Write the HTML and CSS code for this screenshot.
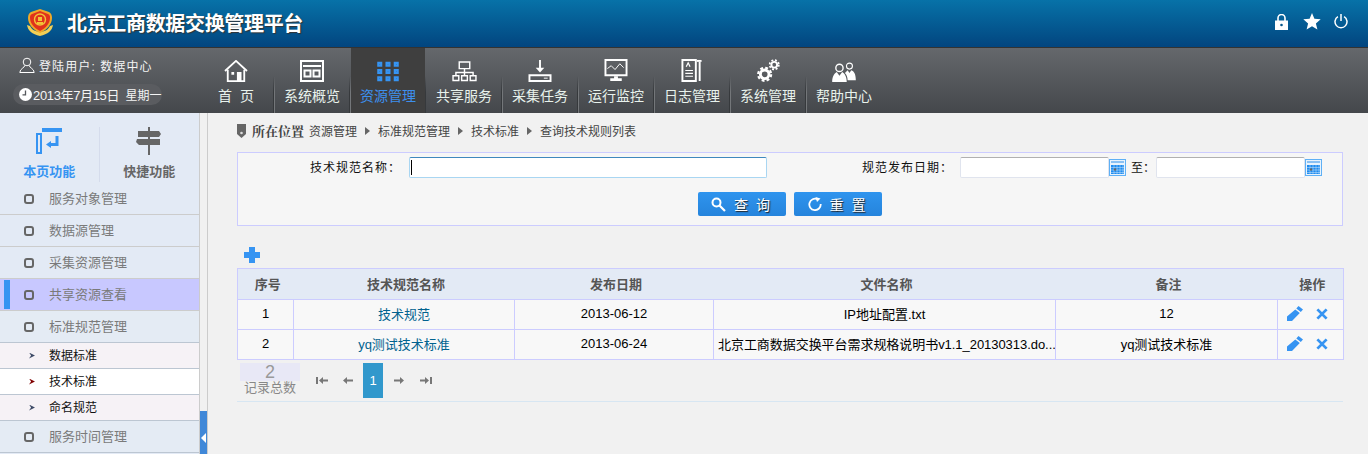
FILE: index.html
```html
<!DOCTYPE html>
<html lang="zh-CN">
<head>
<meta charset="utf-8">
<title>北京工商数据交换管理平台</title>
<link rel="stylesheet" href="styles.css">
</head>
<body>
<header class="topbar">
  <div class="brand">
    <svg class="emblem" width="26" height="27" viewBox="0 0 26 27">
      <path d="M0 16c1 6 5 9 13 11 8-2 12-5 13-11l-3 1c-2 4-5 5-10 6-5-1-8-2-10-6z" fill="#f3cf55"/>
      <path d="M13 0l9 3c2 1 3 3 3 6 0 6-5 12-12 15C6 21 1 15 1 9c0-3 1-5 3-6z" fill="#f0a828"/>
      <path d="M13 2l8 3c2 1 2 2 2 4 0 5-4 10-10 13C7 19 3 14 3 9c0-2 0-3 2-4z" fill="#e0321c"/>
      <circle cx="13" cy="10.500" r="5.500" fill="none" stroke="#f2c438" stroke-width="1.400"/>
      <path d="M10 13h6v2h-6zM11 8h4v4h-4z" fill="#f2c438"/>
    </svg>
    <h1 class="title">北京工商数据交换管理平台</h1>
  </div>
  <div class="top-actions">
    <svg class="lock" width="13" height="16" viewBox="0 0 13 16"><path d="M3 7V4a3.500 3.500 0 0 1 7 0v3" fill="none" stroke="#fff" stroke-width="1.600"/><path d="M0 6.500h13V16H0z" fill="#fff"/><circle cx="6.500" cy="11" r="1.300" fill="#06568c"/></svg>
    <svg width="18" height="17" viewBox="0 0 18 17"><path d="M9 0l2.400 5.800 6.300.5-4.800 4.100 1.500 6.100L9 13.200l-5.400 3.300 1.500-6.100L.3 6.300l6.300-.5z" fill="#fff"/></svg>
    <svg width="14" height="17" viewBox="0 0 14 17"><path d="M3.900 3.600a6 6 0 1 0 6.200 0" fill="none" stroke="#fff" stroke-width="1.500"/><path d="M7 1v7" stroke="#fff" stroke-width="1.500"/></svg>
  </div>
</header>

<nav class="navbar">
  <div class="userbox">
    <div class="user-line">
      <svg width="16" height="16" viewBox="0 0 16 16"><circle cx="8" cy="5" r="3.800" fill="none" stroke="#fff"/><path d="M5.800 8.500C5.500 11 1 11.500.8 15.500h14.400C15 11.500 10.500 11 10.200 8.500" fill="none" stroke="#fff"/></svg>
      <span>登陆用户: 数据中心</span>
    </div>
    <div class="date-pill">
      <svg width="13" height="13" viewBox="0 0 13 13"><circle cx="6.500" cy="6.500" r="6.500" fill="#fff"/><path d="M6.500 2.500v4.300H3.500" fill="none" stroke="#55585c" stroke-width="1.300"/></svg>
      <span>2013年7月15日&nbsp;<small class="week">星期一</small></span>
    </div>
  </div>
  <ul class="menu">
    <li class="menu-item">
      <svg width="24" height="22" viewBox="0 0 26 24"><path d="M1 12L13 1l12 11" fill="none" stroke="#fff" stroke-width="2"/><path d="M4 10.500V23h18V10.500" fill="none" stroke="#fff" stroke-width="2"/><path d="M14 13h5v10h-5zM8 13h3v3H8z" fill="#fff"/></svg>
      <span>首&nbsp;&nbsp;页</span>
    </li>
    <li class="menu-item">
      <svg width="24" height="22" viewBox="0 0 24 22"><path d="M1 1h22v20H1z" fill="none" stroke="#fff" stroke-width="2"/><path d="M3 6h18" stroke="#fff" stroke-width="2"/><path d="M4.500 10.500h6v6h-6zM13.500 10.500h6v6h-6z" fill="none" stroke="#fff" stroke-width="2"/></svg>
      <span>系统概览</span>
    </li>
    <li class="menu-item active">
      <svg width="22" height="21" viewBox="0 0 24 22"><g fill="none" stroke="#3694f2" stroke-width="2.500"><path d="M1.500 1.500h3v3h-3zM10.500 1.500h3v3h-3zM19.500 1.500h3v3h-3zM1.500 9.500h3v3h-3zM10.500 9.500h3v3h-3zM19.500 9.500h3v3h-3zM1.500 17.500h3v3h-3zM10.500 17.500h3v3h-3zM19.500 17.500h3v3h-3z"/></g></svg>
      <span>资源管理</span>
    </li>
    <li class="menu-item">
      <svg width="25" height="21" viewBox="0 0 26 22"><g fill="none" stroke="#fff" stroke-width="1.500"><path d="M7.500 1h11v7h-11zM13 8v4M4 15v-3h18v3M13 12v3M1 15.500h6v5H1zM10 15.500h6v5h-6zM19 15.500h6v5h-6z"/></g></svg>
      <span>共享服务</span>
    </li>
    <li class="menu-item">
      <svg width="24" height="23" viewBox="0 0 24 24"><path d="M12 1v10" stroke="#fff" stroke-width="2"/><path d="M7.500 9h9L12 14z" fill="#fff"/><path d="M1 17h22v6H1z" fill="none" stroke="#fff" stroke-width="2"/><path d="M16 20h4" stroke="#fff"/></svg>
      <span>采集任务</span>
    </li>
    <li class="menu-item">
      <svg width="24" height="23" viewBox="0 0 24 24"><path d="M1 1h22v16H1z" fill="none" stroke="#fff" stroke-width="2"/><path d="M3 10l4-3 4 4 5-6 4 4" fill="none" stroke="#fff"/><path d="M10 18h4v2h4v3H6v-3h4z" fill="#fff"/></svg>
      <span>运行监控</span>
    </li>
    <li class="menu-item">
      <svg width="22" height="23" viewBox="0 0 22 24"><path d="M15 1H1v22h14zM19 3v20" fill="none" stroke="#fff" stroke-width="2"/><path d="M16 1h5v2h-5z" fill="#fff"/><path d="M5 8l2-4 2 4M4 12h8M4 15h8M4 18h8" fill="none" stroke="#fff" stroke-width="1.300"/></svg>
      <span>日志管理</span>
    </li>
    <li class="menu-item">
      <svg width="23" height="23" viewBox="0 0 24 24"><circle cx="8" cy="16" r="4.500" fill="none" stroke="#fff" stroke-width="3"/><circle cx="8" cy="16" r="6.800" fill="none" stroke="#fff" stroke-width="2.200" stroke-dasharray="3 2.300"/><circle cx="18" cy="6" r="3" fill="none" stroke="#fff" stroke-width="2"/><circle cx="18" cy="6" r="4.800" fill="none" stroke="#fff" stroke-width="1.800" stroke-dasharray="2 1.800"/></svg>
      <span>系统管理</span>
    </li>
    <li class="menu-item">
      <svg width="26" height="20" viewBox="0 0 28 22"><circle cx="9" cy="6.500" r="4" fill="none" stroke="#fff" stroke-width="1.500"/><circle cx="20" cy="4.500" r="3.300" fill="none" stroke="#fff" stroke-width="1.200"/><path d="M1 22c0-6 2-9 5-11l3 4 3-4c3 2 5 5 5 11z" fill="#fff"/><path d="M18 20c0-3-1-6-3-8l3-3 2 3 2-3c3 1 5 4 5 11h-9z" fill="#fff"/></svg>
      <span>帮助中心</span>
    </li>
  </ul>
</nav>

<div class="workspace">
  <aside class="sidebar">
    <div class="tabs">
      <div class="tab current">
        <svg class="tab-icon" width="26" height="26" viewBox="0 0 26 26"><path d="M6 0h20v4H6z" fill="#3694f2"/><path d="M0 5h6v21H0z" fill="#3694f2"/><path d="M2 7h2v17H2z" fill="#e3eaf5"/><path d="M21 8v8.500H12" fill="none" stroke="#3694f2" stroke-width="3"/><path d="M10 16.500l5-3.500v7z" fill="#3694f2"/></svg>
        <span>本页功能</span>
      </div>
      <div class="tab">
        <svg class="tab-icon" width="26" height="28" viewBox="0 0 26 28"><path d="M12 0h2v28h-2z" fill="#666"/><path d="M2 4h21l2 3-2 3H2zM1 12h23v6H3l-3-3z" fill="#666"/></svg>
        <span>快捷功能</span>
      </div>
    </div>
    <ul class="side-list">
      <li class="side-item"><i class="bullet"></i>服务对象管理</li>
      <li class="side-item"><i class="bullet"></i>数据源管理</li>
      <li class="side-item"><i class="bullet"></i>采集资源管理</li>
      <li class="side-item selected"><i class="bullet"></i>共享资源查看</li>
      <li class="side-item open"><i class="bullet"></i>标准规范管理</li>
      <li class="side-sub"><i class="chev"></i>数据标准</li>
      <li class="side-sub on"><i class="chev"></i>技术标准</li>
      <li class="side-sub"><i class="chev"></i>命名规范</li>
      <li class="side-item open"><i class="bullet"></i>服务时间管理</li>
    </ul>
  </aside>
  <div class="splitter"><span class="handle"></span></div>

  <main class="content">
    <div class="crumbs">
      <svg width="9" height="14" viewBox="0 0 9 14"><path d="M0 0h9v10l-4.500 4L0 10z" fill="#666"/><circle cx="4.500" cy="9" r="1.300" fill="#ddd"/></svg>
      <b>所在位置</b>
      <span>资源管理</span><i class="arrow"></i>
      <span>标准规范管理</span><i class="arrow"></i>
      <span>技术标准</span><i class="arrow"></i>
      <span>查询技术规则列表</span>
    </div>

    <form class="search">
      <div class="search-row">
        <label class="lab lab-name">技术规范名称：</label>
        <div class="name-input"><span class="caret"></span></div>
        <label class="lab lab-date">规范发布日期：</label>
        <div class="date-input"></div>
        <svg class="cal" width="17" height="17" viewBox="0 0 17 17"><path d="M0 0h17v17H0z" fill="#5fb0f5"/><path d="M1 1h15v15H1z" fill="#e8f3fd"/><path d="M2 3h13" stroke="#2f8fe8"/><path d="M2 6h13v9H2z" fill="#1f8cf0"/><path d="M2 8.500h13M2 11h13M2 13.500h13M5 6v9M8 6v9M11 6v9M14 6v9" stroke="#cfe6fb" stroke-width=".5"/><circle cx="6" cy="10.500" r="1.200" fill="#666"/></svg>
        <label class="lab lab-to">至：</label>
        <div class="date-input"></div>
        <svg class="cal" width="17" height="17" viewBox="0 0 17 17"><path d="M0 0h17v17H0z" fill="#5fb0f5"/><path d="M1 1h15v15H1z" fill="#e8f3fd"/><path d="M2 3h13" stroke="#2f8fe8"/><path d="M2 6h13v9H2z" fill="#1f8cf0"/><path d="M2 8.500h13M2 11h13M2 13.500h13M5 6v9M8 6v9M11 6v9M14 6v9" stroke="#cfe6fb" stroke-width=".5"/><circle cx="6" cy="10.500" r="1.200" fill="#666"/></svg>
      </div>
      <div class="btn-row">
        <button type="button" class="btn">
          <svg width="15" height="15" viewBox="0 0 15 15"><circle cx="5.500" cy="5.500" r="4" fill="none" stroke="#fff" stroke-width="2"/><path d="M8.500 8.500l5.500 5.500" stroke="#fff" stroke-width="2.200"/></svg>
          <span>查 询</span>
        </button>
        <button type="button" class="btn">
          <svg width="14" height="14" viewBox="0 0 14 14"><path d="M9.500 2.300A5.700 5.700 0 1 0 12.700 7" fill="none" stroke="#fff" stroke-width="1.800"/><path d="M7.500 0l5 1.500-3.500 3.500z" fill="#fff"/></svg>
          <span>重 置</span>
        </button>
      </div>
    </form>

    <svg class="add" width="16" height="16" viewBox="0 0 16 16"><path d="M5 0h6v5h5v6h-5v5H5v-5H0V5h5z" fill="#3694f2"/></svg>

    <table class="grid">
      <thead>
        <tr><th class="c1">序号</th><th class="c2">技术规范名称</th><th class="c3">发布日期</th><th class="c4">文件名称</th><th class="c5">备注</th><th class="c6">操作</th></tr>
      </thead>
      <tbody>
        <tr>
          <td>1</td><td><a class="link">技术规范</a></td><td>2013-06-12</td><td>IP地址配置.txt</td><td>12</td>
          <td>
            <div class="ops">
              <svg width="16" height="15" viewBox="0 0 16 15"><path d="M11.500 0L16 3.500 13.800 6l-4.500-3.500zM8.300 3.500l4.500 3.500L5 15H0v-4.500z" fill="#3694f2"/></svg>
              <svg width="12" height="12" viewBox="0 0 13 13"><path d="M1.500 1.500l10 10M11.500 1.500l-10 10" stroke="#3694f2" stroke-width="3"/></svg>
            </div>
          </td>
        </tr>
        <tr>
          <td>2</td><td><a class="link">yq测试技术标准</a></td><td>2013-06-24</td><td class="clip">北京工商数据交换平台需求规格说明书v1.1_20130313.do...</td><td>yq测试技术标准</td>
          <td>
            <div class="ops">
              <svg width="16" height="15" viewBox="0 0 16 15"><path d="M11.500 0L16 3.500 13.800 6l-4.500-3.500zM8.300 3.500l4.500 3.500L5 15H0v-4.500z" fill="#3694f2"/></svg>
              <svg width="12" height="12" viewBox="0 0 13 13"><path d="M1.500 1.500l10 10M11.500 1.500l-10 10" stroke="#3694f2" stroke-width="3"/></svg>
            </div>
          </td>
        </tr>
      </tbody>
    </table>

    <div class="pager">
      <div class="total"><strong>2</strong><span>记录总数</span></div>
      <div class="pages">
        <span class="pg"><svg width="12" height="7" viewBox="0 0 12 7"><path d="M0 0h2v7H0zM3 3.500L7 0v2.500h5v2H7V7z" fill="#777"/></svg></span>
        <span class="pg"><svg width="10" height="7" viewBox="0 0 10 7"><path d="M0 3.500L4 0v2.500h6v2H4V7z" fill="#777"/></svg></span>
        <span class="pg cur">1</span>
        <span class="pg"><svg width="10" height="7" viewBox="0 0 10 7"><path d="M10 3.500L6 0v2.500H0v2h6V7z" fill="#777"/></svg></span>
        <span class="pg last"><svg width="12" height="7" viewBox="0 0 12 7"><path d="M12 0h-2v7h2zM9 3.500L5 0v2.500H0v2h5V7z" fill="#777"/></svg></span>
      </div>
    </div>
  </main>
</div>
</body>
</html>
```
FILE: styles.css
```css
* { box-sizing: border-box; }
html, body { margin: 0; padding: 0; height: 454px; overflow: hidden; }
body { font-family: "Liberation Sans", "Noto Sans CJK SC", sans-serif; font-size: 12px; color: #000; background: #f1f1f1; }
ul { list-style: none; margin: 0; padding: 0; }

.topbar { height: 48px; display: flex; justify-content: space-between; align-items: center; background: linear-gradient(#0772a8, #02457f); border-bottom: 1px solid #333; }
.brand { display: flex; align-items: center; padding-left: 27px; }
.emblem { margin-right: 14px; margin-top: -2px; }
.title { margin: 0; font-size: 20px; font-weight: bold; line-height: 24px; color: #fff; text-shadow: 1px 1px 1px #333; letter-spacing: -.33px; }
.top-actions { display: flex; align-items: center; gap: 13px; padding-right: 20px; margin-top: -4px; }
.lock { margin-right: 2px; }

.navbar { height: 65px; display: flex; background: linear-gradient(#65686c, #44474b); color: #fff; }
.userbox { width: 199px; flex: none; padding: 8px 0 0 13px; }
.user-line { display: flex; align-items: center; gap: 4px; padding-left: 6px; height: 18px; color: #f4f4f4; letter-spacing: 1.100px; }
.date-pill { display: inline-flex; align-items: center; gap: 1px; width: 149px; height: 21px; margin-top: 10px; padding: 0 0 0 6px; border-radius: 11px; background: #5a5c60; color: #f4f4f4; white-space: nowrap; font-size: 13px; letter-spacing: -.35px; }
.week { font-size: 12px; letter-spacing: 0; margin-left: 3px; }
.menu { display: flex; }
.menu-item { width: 76px; height: 65px; display: flex; flex-direction: column; align-items: center; justify-content: flex-end; padding: 0 2px 9px 0; font-size: 14px; line-height: 16px; color: #e8f2ec; white-space: nowrap; background: linear-gradient(transparent 28px, #36393c 44px) calc(100% - 1px) 0 / 1px 100% no-repeat, linear-gradient(transparent 28px, #74777a 44px) 100% 0 / 1px 100% no-repeat; }
.menu-item svg { margin-bottom: 6px; }
.menu-item:last-child { background: none; }
.menu-item.active { background: linear-gradient(to right, #3f3f3f 74px, transparent 74px), linear-gradient(transparent 28px, #36393c 44px) calc(100% - 1px) 0 / 1px 100% no-repeat; color: #3d90ee; }

.workspace { display: flex; height: 341px; }
.sidebar { width: 200px; flex: none; background: #e3eaf5; border-right: 1px solid #ccc; overflow: hidden; }
.tabs { display: flex; height: 70px; padding-top: 14px; }
.tab { width: 100px; display: flex; flex-direction: column; align-items: center; font-weight: bold; font-size: 13px; color: #666; height: 55px; }
.tab.current { color: #3694f2; border-right: 1px solid #d5dcec; }
.tab-icon { height: 28px; margin-bottom: 6px; }
.side-item { position: relative; height: 32px; display: flex; align-items: center; padding: 0 0 2px 24px; border-bottom: 1px solid #ccc; font-size: 13px; color: #7a7a7a; }
.side-item.selected { background: #c8c8ff; }
.side-item.selected::before { content: ""; position: absolute; left: 4px; top: 1px; bottom: 1px; width: 6px; background: #3694f2; }
.side-item.open { background: #e4ebf4; border-bottom-color: #bcc6d2; }
.bullet { width: 10px; height: 10px; margin-right: 15px; margin-top: 2px; border: 2px solid #666; border-radius: 3px; }
.side-sub { height: 26px; display: flex; align-items: center; padding: 0 0 2px 29px; border-bottom: 1px solid #bcc6d2; background: #f6f2f6; color: #111; font-size: 12px; }
.side-sub.on { background: #fff; }
.chev { width: 6px; height: 6px; margin-right: 14px; margin-top: 2px; background: #3d4a66; clip-path: polygon(0 0, 100% 50%, 0 100%, 35% 50%); }
.side-sub.on .chev { background: #800000; }
.splitter { position: relative; width: 8px; flex: none; background: #f1f1f1; border-right: 1px solid #ccc; }
.handle { position: absolute; left: 0; right: 0; bottom: 0; height: 43px; background: #4088d8; }
.handle::after { content: ""; position: absolute; left: 1px; top: 22px; border-right: 5px solid #fff; border-top: 5px solid transparent; border-bottom: 5px solid transparent; }

.content { flex: 1; padding: 0 25px 0 29px; min-width: 0; }
.crumbs { height: 39px; display: flex; align-items: center; gap: 5px; padding-bottom: 4px; color: #444; }
.crumbs b { font-family: "Liberation Serif", "Noto Serif CJK SC", "Noto Sans CJK SC", serif; font-size: 13px; margin: 0 0 0 1px; color: #444; }
.arrow { width: 0; height: 0; margin: 0 3px; border-left: 5px solid #666; border-top: 4px solid transparent; border-bottom: 4px solid transparent; }
.search { height: 74px; background: #f6f6f6; border: 1px solid #ccccff; }
.search-row { display: flex; align-items: center; height: 29px; }
.lab { color: #111; letter-spacing: 1px; white-space: nowrap; padding-bottom: 2px; }
.lab-name { margin-left: 72px; width: 99px; }
.name-input { width: 358px; height: 21px; border: 1px solid #3f88bd; border-bottom-color: #a9d6f2; border-left-color: #a9d6f2; border-right-color: #a9d6f2; border-radius: 2px; background: #fff; padding: 2px 0 0 1px; }
.caret { display: block; width: 1px; height: 15px; background: #000; }
.lab-date { margin-left: 95px; width: 98px; }
.date-input { width: 149px; height: 21px; background: #fff; border: 1px solid #e0e4ee; border-top-color: #b0b0b0; border-radius: 2px; }
.cal { flex: none; }
.lab-to { margin: 0 2px 0 5px; width: 23px; letter-spacing: 0; }
.btn-row { display: flex; justify-content: center; gap: 8px; padding-top: 10px; padding-right: 1px; }
.btn { width: 88px; height: 24px; display: flex; align-items: center; justify-content: center; gap: 8px; padding: 0; border: 0; border-radius: 2px; background: linear-gradient(#2f94ee, #2584dc); color: #fff; font: 14px "Liberation Sans", "Noto Sans CJK SC", sans-serif; letter-spacing: 2px; text-shadow: 1px 1px 1px #222; }
.add { display: block; margin: 21px 0 5px 7px; }

.grid { width: 1106px; table-layout: fixed; border-collapse: collapse; background: #f8f8f8; font-size: 13px; }
.grid th, .grid td { border: 1px solid #ccccff; padding: 0 0 2px; text-align: center; white-space: nowrap; overflow: hidden; height: 30px; }
.grid th { height: 31px; padding-left: 4px; background: #e3eaf5; color: #555; font-size: 13px; font-weight: bold; border-left: 0; border-right: 0; }
.grid th:first-child { border-left: 1px solid #ccccff; }
.grid th:last-child { border-right: 1px solid #ccccff; }
.c1 { width: 56px; } .c2 { width: 221px; } .c3 { width: 199px; } .c4 { width: 342px; } .c5 { width: 222px; } .c6 { width: 66px; }
.link { color: #00628f; }
.grid td.clip { overflow: hidden; padding-left: 4px; letter-spacing: -.05px; }
.ops { display: flex; align-items: center; justify-content: center; gap: 13px; padding-right: 7px; }

.pager { display: flex; height: 42px; padding: 3px 0 0 3px; border-bottom: 1px solid #d7e6f2; }
.total { width: 60px; text-align: center; color: #888; font-size: 13px; line-height: 14px; }
.total strong { display: block; height: 18px; font-size: 18px; line-height: 18px; font-weight: normal; background: #e8e8f6; color: #999; }
.pages { display: flex; height: 35px; margin-left: 9px; }
.pg { width: 26px; display: flex; align-items: center; justify-content: center; }
.pg.cur { width: 20px; margin: 0 3px 0 2px; background: #3198cc; color: #fff; font-size: 13px; }
.pg.last { margin-left: 1px; }
```
